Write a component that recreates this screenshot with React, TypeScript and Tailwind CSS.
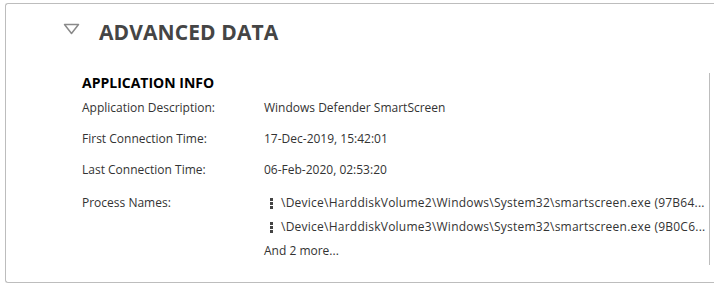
import React from "react";

const rows = [
  { label: "Application Description:", value: "Windows Defender SmartScreen" },
  { label: "First Connection Time:", value: "17-Dec-2019, 15:42:01" },
  { label: "Last Connection Time:", value: "06-Feb-2020, 02:53:20" },
];

const procs = [
  "\\Device\\HarddiskVolume2\\Windows\\System32\\smartscreen.exe (97B64...",
  "\\Device\\HarddiskVolume3\\Windows\\System32\\smartscreen.exe (9B0C6...",
];

function Kebab() {
  return (
    <span className="flex flex-col gap-[1px] mr-[8px] w-[3px]">
      <span className="block w-[3px] h-[3px] bg-[#444]" />
      <span className="block w-[3px] h-[3px] bg-[#444]" />
      <span className="block w-[3px] h-[3px] bg-[#444]" />
    </span>
  );
}

export default function App() {
  return (
    <div
      className="w-[714px] h-[285px] overflow-hidden bg-white pt-[3px] pl-[5px]"
      style={{ fontFamily: '"Open Sans", sans-serif' }}
    >
      <div className="w-[720px] h-[280px] border-l border-t border-b border-[#bdbdbd] rounded-l-[3px]">
        <div className="flex items-center h-[58px] pl-[57px]">
          <svg width="17" height="12" viewBox="0 0 17 12" className="mb-[8px]">
            <path d="M1.5 1.5 L15.5 1.5 L8.5 10.5 Z" fill="none" stroke="#8a8a8a" strokeWidth="1.5" strokeLinejoin="round" />
          </svg>
          <span className="ml-[19px] text-[21px] font-bold text-[#454545] tracking-[0.1px]">ADVANCED DATA</span>
        </div>
        <div className="ml-[76px] w-[628px] border-r border-[#bdbdbd] mt-[11px] h-[192px] text-[#333] text-[12px]">
          <div className="text-[14px] font-bold text-black leading-[19px]">APPLICATION INFO</div>
          <div>
            {rows.map((r) => (
              <div key={r.label} className="flex items-center h-[31px]">
                <span className="w-[182px]">{r.label}</span>
                <span>{r.value}</span>
              </div>
            ))}
            <div className="flex mt-[6px]">
              <span className="w-[182px] leading-[24px]">Process Names:</span>
              <div className="flex flex-col">
                {procs.map((p) => (
                  <div key={p} className="flex items-center h-[24px] pl-[6px]">
                    <Kebab />
                    <span className="tracking-[0.24px]">{p}</span>
                  </div>
                ))}
                <div className="h-[23px] flex items-center">And 2 more...</div>
              </div>
            </div>
          </div>
        </div>
      </div>
    </div>
  );
}
